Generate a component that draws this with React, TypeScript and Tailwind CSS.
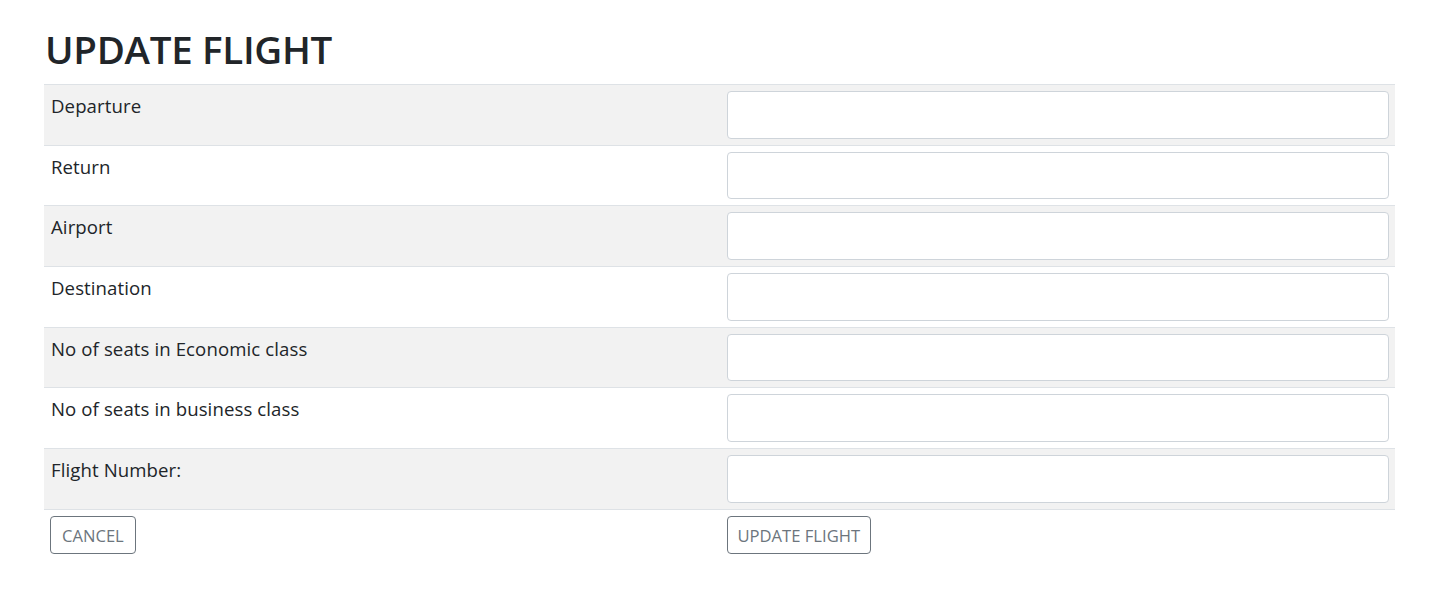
import React from "react";

const rows = [
  "Departure",
  "Return",
  "Airport",
  "Destination",
  "No of seats in Economic class",
  "No of seats in business class",
  "Flight Number:",
];

export default function App() {
  return (
    <div
      className="min-h-screen bg-white text-[#212529]"
      style={{ fontFamily: '"Open Sans", "Noto Sans", sans-serif' }}
    >
      <div className="ml-[44px] mr-[50px] pt-[26px]">
        <h1 className="text-[38.5px] leading-[46px] font-semibold ml-[1px] mb-[12px] tracking-[-0.3px]">
          UPDATE FLIGHT
        </h1>
        <div className="border-t border-[#dee2e6]">
          {rows.map((label, i) => (
            <div
              key={label}
              className={`grid grid-cols-2 border-b border-[#dee2e6] ${
                i % 2 === 0 ? "bg-[#f2f2f2]" : "bg-white"
              }`}
            >
              <div className="pl-[7px] pr-[6px] pt-[7px] text-[18.6px] leading-[28px] tracking-[0.1px]">
                {label}
              </div>
              <div className="pl-[7px] pr-[6px] py-[6px]">
                <input
                  type="text"
                  className="block w-full h-[47.7px] bg-white border border-[#ced4da] rounded-[4px] outline-none"
                />
              </div>
            </div>
          ))}
          <div className="grid grid-cols-2">
            <div className="pl-[6px] pt-[6px]">
              <button className="h-[38px] px-[11px] pt-[3px] border border-[#6c757d] rounded-[4px] text-[#6c757d] text-[16.6px] leading-[24px] bg-white">
                CANCEL
              </button>
            </div>
            <div className="pl-[7px] pt-[6px]">
              <button className="h-[38px] px-[10px] pt-[3px] border border-[#6c757d] rounded-[4px] text-[#6c757d] text-[16.6px] leading-[24px] bg-white">
                UPDATE FLIGHT
              </button>
            </div>
          </div>
        </div>
      </div>
    </div>
  );
}
